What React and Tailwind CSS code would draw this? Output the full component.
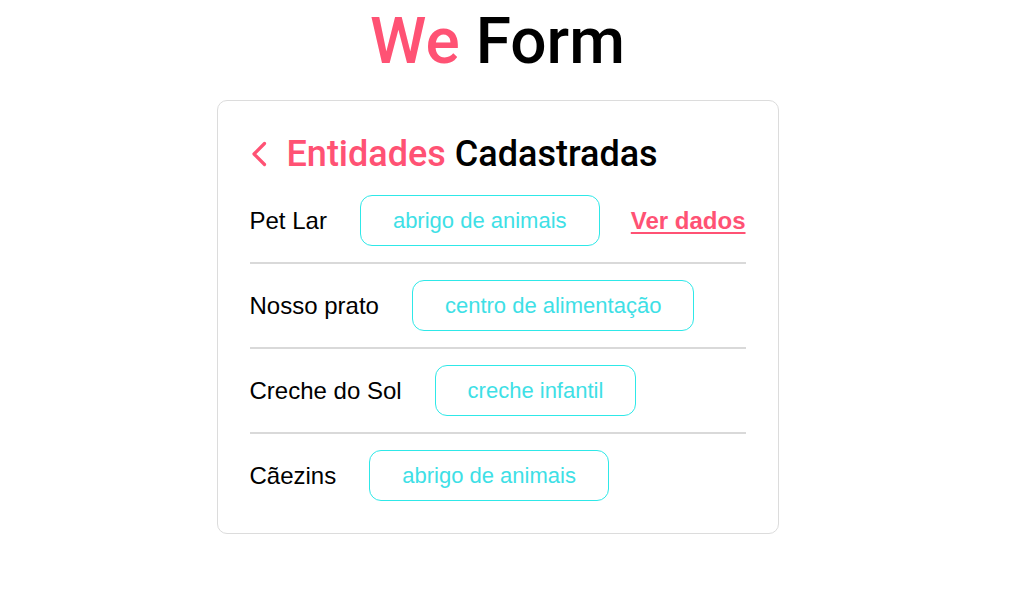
import React from 'react';

const entidades = [
  { id: 1, nome: 'Pet Lar', tipo: 'abrigo de animais', destaque: true },
  { id: 2, nome: 'Nosso prato', tipo: 'centro de alimentação' },
  { id: 3, nome: 'Creche do Sol', tipo: 'creche infantil' },
  { id: 4, nome: 'Cãezins', tipo: 'abrigo de animais' },
];

const App = () => {
  return (
    <div className="min-h-screen bg-white flex flex-col items-center pr-[28px]">
      {/* título */}
      <h1 className="mt-[4px] text-[64px] leading-[76px] font-medium font-['Roboto',sans-serif] text-black">
        <span className="text-[#ff5274]">We</span> Form
      </h1>

      {/* card */}
      <div className="mt-[20px] w-[562px] border border-[#dcdcdc] rounded-[10px] px-[32px] pt-[33px] pb-[32px]">
        <div className="flex items-center gap-[20px] ml-[1px]">
          <svg width="16" height="26" viewBox="0 0 16 26" fill="none">
            <path d="M13.5 2.5L3 13l10.5 10.5" stroke="#ff5274" strokeWidth="3.2" strokeLinecap="round" strokeLinejoin="round" />
          </svg>
          <h2 className="text-[36px] leading-[40px] font-medium font-['Roboto',sans-serif] text-black">
            <span className="text-[#ff5274]">Entidades</span> Cadastradas
          </h2>
        </div>

        <div className="mt-[21px] font-['Liberation_Sans',Arial,sans-serif]">
          {entidades.map((item, index) => (
            <div key={item.id}>
              {index > 0 && <div className="h-[2px] bg-[#d9d9d9]" />}
              <div className={`flex items-center ${index > 0 ? 'pt-[16px]' : ''} ${index < entidades.length - 1 ? 'pb-[16px]' : ''}`}>
                <span className="text-[24px] text-black leading-none">{item.nome}</span>
                <span className="ml-[33px] h-[51px] px-[32px] flex items-center border border-[#2ee8e8] rounded-[12px] text-[22px] text-[#3ee0e6]">
                  {item.tipo}
                </span>
                {item.destaque && (
                  <a href="#" className="ml-auto text-[24px] font-bold text-[#ff5274] underline decoration-2 underline-offset-[3px]">
                    Ver dados
                  </a>
                )}
              </div>
            </div>
          ))}
        </div>
      </div>
    </div>
  );
};

export default App;
